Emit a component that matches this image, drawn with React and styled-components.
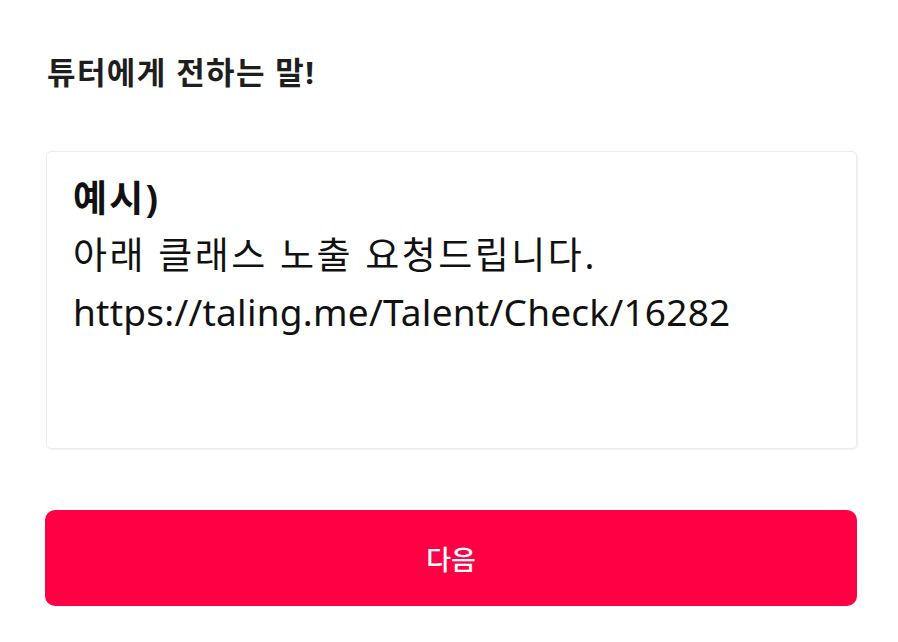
import React from 'react'
import styled, { createGlobalStyle } from 'styled-components'

const Global = createGlobalStyle`
    body {
        margin: 0;
        background: #fff;
        font-family: "Noto Sans", "Noto Sans CJK KR", sans-serif;
    }
`

const App = () => {
    return (
        <Page>
            <Global />
            <Title>튜터에게 전하는 말!</Title>
            <MessageBox>
                <Line bold spacing={2.2}>예시)</Line>
                <Line spacing={2.5}>아래 클래스 노출 요청드립니다.</Line>
                <Line spacing={0.25}>https://taling.me/Talent/Check/16282</Line>
            </MessageBox>
            <NextButton>다음</NextButton>
        </Page>
    )
}

const Page = styled.div`
    width: 898px;
    height: 642px;
    box-sizing: border-box;
    padding: 48px 41px 0 45px;
    display: flex;
    flex-direction: column;
`

const Title = styled.h2`
    margin: 0 0 0 2px;
    font-size: 31px;
    line-height: 48px;
    font-weight: 700;
    letter-spacing: 1.4px;
    color: #1e1e1e;
`

const MessageBox = styled.div`
    margin: 55px 0 0 1px;
    height: 298px;
    box-sizing: border-box;
    border: 1px solid #ececec;
    border-radius: 5px;
    box-shadow: 1px 1px 2px rgba(0, 0, 0, 0.06);
    padding: 17px 26px;
    color: #111;
    font-size: 37px;
    line-height: 57px;
`

const Line = styled.div`
    font-weight: ${(p) => (p.bold ? 700 : 400)};
    letter-spacing: ${(p) => p.spacing}px;
`

const NextButton = styled.button`
    margin-top: 61px;
    height: 96px;
    width: 812px;
    border: none;
    border-radius: 10px;
    background: #ff0044;
    color: #fff;
    font-family: inherit;
    font-size: 27px;
    font-weight: 500;
    cursor: pointer;
`

export default App
